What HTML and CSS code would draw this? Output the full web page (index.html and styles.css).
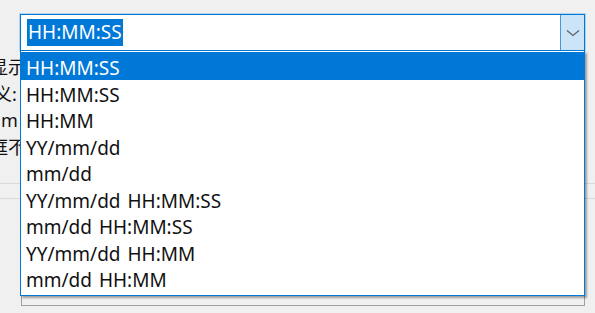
FILE: index.html
```html
<!DOCTYPE html>
<html lang="zh-CN">
<head>
  <meta charset="UTF-8">
  <title>时间格式</title>
  <link rel="stylesheet" href="styles.css">
</head>
<body>
  <div class="window">
    <div class="combo">
      <div class="combo-text"><span class="sel">HH:MM:SS</span></div>
      <div class="combo-btn">
        <svg width="14" height="8" viewBox="0 0 14 8"><polyline points="1,1.5 7,6.5 13,1.5" fill="none" stroke="#606060" stroke-width="1.3"/></svg>
      </div>
    </div>

    <div class="labels">
      <div class="lbl lbl-a">显示时间</div>
      <div class="lbl lbl-b">义: 格式</div>
      <div class="lbl lbl-c">m 格式</div>
      <div class="lbl lbl-a">框不显示</div>
    </div>

    <div class="sep sep-1"></div>
    <div class="sep sep-2"></div>
    <div class="panel"></div>

    <ul class="dropdown">
      <li class="active">HH:MM:SS</li>
      <li>HH:MM:SS</li>
      <li>HH:MM</li>
      <li>YY/mm/dd</li>
      <li>mm/dd</li>
      <li>YY/mm/dd HH:MM:SS</li>
      <li>mm/dd HH:MM:SS</li>
      <li>YY/mm/dd HH:MM</li>
      <li>mm/dd HH:MM</li>
    </ul>
  </div>
</body>
</html>
```

FILE: styles.css
```css
body {
  margin: 0;
  background-color: #f0f0f0;
  font-family: "Noto Sans", "Noto Sans CJK SC", sans-serif;
  font-size: 19px;
  color: #111;
  overflow: hidden;
}
.window {
  position: relative;
  height: 313px;
  padding-top: 14px;
  box-sizing: border-box;
}
.combo {
  display: flex;
  margin-left: 20px;
  width: 565px;
  height: 37px;
  box-sizing: border-box;
  border: 1px solid #0078d7;
  background: #ffffff;
  box-shadow: 0 0 0 1px rgba(0,120,215,0.25);
}
.combo-text {
  flex: 1;
  display: flex;
  align-items: center;
  padding-left: 6px;
}
.sel {
  background: #0078d7;
  color: #ffffff;
  line-height: 27px;
  padding: 0 1px;
}
.combo-btn {
  width: 23px;
  display: flex;
  align-items: center;
  justify-content: center;
  background: #cce4f7;
  border-left: 1px solid #4a96dc;
}
.labels {
  margin-top: 3px;
  width: 20px;
  font-size: 18px;
}
.lbl {
  white-space: nowrap;
  height: 26.5px;
  line-height: 26.5px;
}
.lbl-a { margin-left: -10px; }
.lbl-b { margin-left: -6px; }
.lbl-c { margin-left: 1px; }
.sep {
  height: 1px;
  background: #d9d9d9;
}
.sep-1 { margin-top: 23px; }
.sep-2 { margin-top: 14px; }
.panel {
  margin-top: 20px;
  margin-left: 21px;
  width: 564px;
  height: 87px;
  box-sizing: border-box;
  border: 1px solid #a0a0a0;
  border-top: none;
}
.dropdown {
  position: absolute;
  left: 20px;
  top: 51px;
  width: 565px;
  margin: 0;
  padding: 1px 0 3px;
  list-style: none;
  box-sizing: border-box;
  background: #ffffff;
  border: 1px solid #0078d7;
  border-top: none;
  box-shadow: 2px 2px 2px rgba(0,0,0,0.35);
}
.dropdown li {
  height: 26.5px;
  line-height: 23px;
  padding: 3.5px 0 0 5px;
  box-sizing: border-box;
  word-spacing: 2px;
}
.dropdown li.active {
  background: #0078d7;
  color: #ffffff;
  height: 28px;
  padding-top: 5px;
}
```
